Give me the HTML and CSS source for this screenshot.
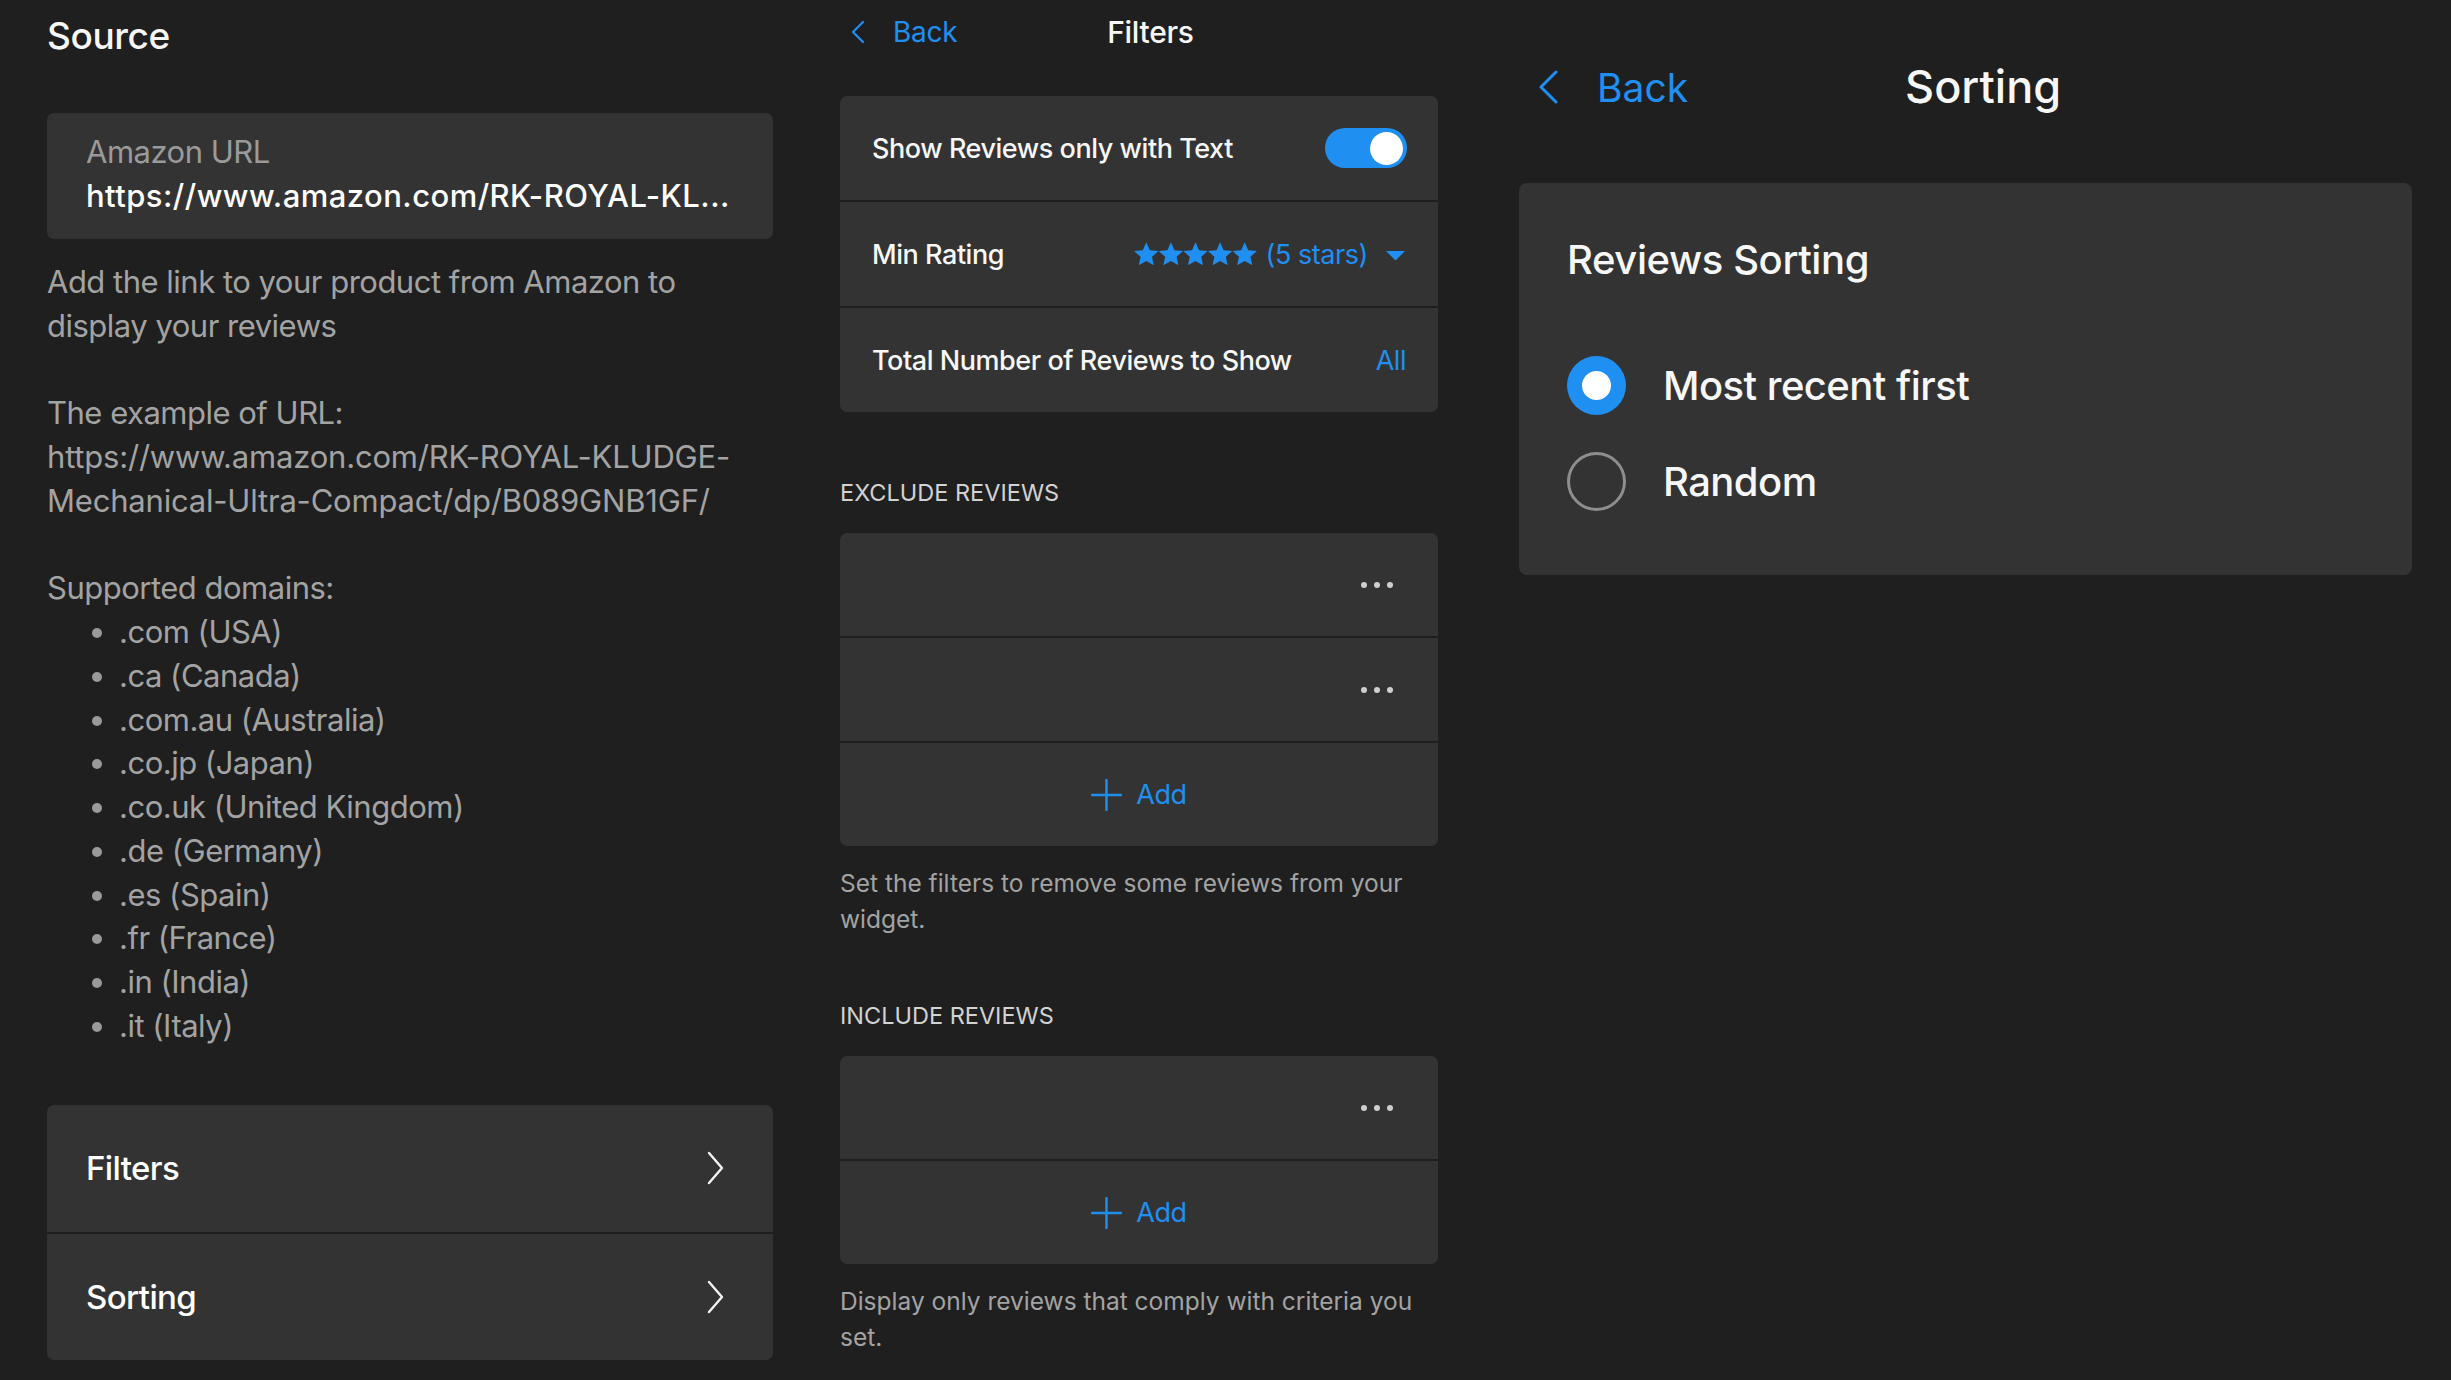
FILE: index.html
```html
<!DOCTYPE html>
<html lang="en">
<head>
<meta charset="utf-8">
<title>Source / Filters / Sorting</title>
<link rel="stylesheet" href="styles.css">
</head>
<body>
<div class="app">
  <section class="col col-source">
    <h1 class="source-title">Source</h1>
    <div class="url-field">
      <div class="url-label">Amazon URL</div>
      <div class="url-value">https://www.amazon.com/RK-ROYAL-KL...</div>
    </div>
    <div class="source-help">
      <p>Add the link to your product from Amazon to display your reviews</p>
      <p>The example of URL:<br><span class="example-url">https://www.amazon.com/RK-ROYAL-KLUDGE-Mechanical-Ultra-Compact/dp/B089GNB1GF/</span></p>
      <p class="domains-title">Supported domains:</p>
      <ul class="domains">
        <li>.com (USA)</li>
        <li>.ca (Canada)</li>
        <li>.com.au (Australia)</li>
        <li>.co.jp (Japan)</li>
        <li>.co.uk (United Kingdom)</li>
        <li>.de (Germany)</li>
        <li>.es (Spain)</li>
        <li>.fr (France)</li>
        <li>.in (India)</li>
        <li>.it (Italy)</li>
      </ul>
    </div>
    <div class="nav-card">
      <div class="nav-row">
        <span>Filters</span>
        <svg class="nav-chevron" width="17" height="34" viewBox="0 0 17 34"><path d="M2 2 L15 17 L2 32" fill="none" stroke="#f2f2f2" stroke-width="2.4" stroke-linecap="round" stroke-linejoin="round"/></svg>
      </div>
      <div class="nav-row">
        <span>Sorting</span>
        <svg class="nav-chevron" width="17" height="34" viewBox="0 0 17 34"><path d="M2 2 L15 17 L2 32" fill="none" stroke="#f2f2f2" stroke-width="2.4" stroke-linecap="round" stroke-linejoin="round"/></svg>
      </div>
    </div>
  </section>

  <section class="col col-filters">
    <header class="f-header">
      <a class="f-back">
        <svg class="f-back-chevron" width="14" height="24" viewBox="0 0 14 24"><path d="M12 2 L2 12 L12 22" fill="none" stroke="#1f8ff2" stroke-width="2.2" stroke-linecap="round" stroke-linejoin="round"/></svg>
        <span>Back</span>
      </a>
      <h2 class="f-title">Filters</h2>
    </header>

    <div class="f-card">
      <div class="f-row">
        <span class="f-label">Show Reviews only with Text</span>
        <span class="toggle"><span class="toggle-knob"></span></span>
      </div>
      <div class="f-row">
        <span class="f-label">Min Rating</span>
        <span class="rating">
          <svg class="stars" width="123" height="24" viewBox="0 0 123 24">
            <defs>
              <path id="star" d="M12.3 0.2 L15.83 8.15 L24.47 9.04 L18.01 14.85 L19.82 23.36 L12.3 19 L4.78 23.36 L6.59 14.85 L0.13 9.04 L8.77 8.15 Z"/>
            </defs>
            <g fill="#1f8ff2">
              <use href="#star"/>
              <use href="#star" x="24.6"/>
              <use href="#star" x="49.2"/>
              <use href="#star" x="73.8"/>
              <use href="#star" x="98.4"/>
            </g>
          </svg>
          <span class="rating-text">(5 stars)</span>
          <svg class="caret" width="21" height="11" viewBox="0 0 21 11"><path d="M1 1 L20 1 L10.5 10.5 Z" fill="#1f8ff2"/></svg>
        </span>
      </div>
      <div class="f-row">
        <span class="f-label">Total Number of Reviews to Show</span>
        <span class="f-value">All</span>
      </div>
    </div>

    <div class="f-section-label">EXCLUDE REVIEWS</div>
    <div class="f-card">
      <div class="f-row f-row-empty"><span class="dots"><i></i><i></i><i></i></span></div>
      <div class="f-row f-row-empty"><span class="dots"><i></i><i></i><i></i></span></div>
      <div class="f-row f-row-add">
        <svg class="plus" width="31" height="32" viewBox="0 0 31 32"><path d="M15.5 1 V31 M1 16 H30" stroke="#1f8ff2" stroke-width="2.4" stroke-linecap="round"/></svg>
        <span>Add</span>
      </div>
    </div>
    <p class="f-help">Set the filters to remove some reviews from your widget.</p>

    <div class="f-section-label">INCLUDE REVIEWS</div>
    <div class="f-card">
      <div class="f-row f-row-empty"><span class="dots"><i></i><i></i><i></i></span></div>
      <div class="f-row f-row-add">
        <svg class="plus" width="31" height="32" viewBox="0 0 31 32"><path d="M15.5 1 V31 M1 16 H30" stroke="#1f8ff2" stroke-width="2.4" stroke-linecap="round"/></svg>
        <span>Add</span>
      </div>
    </div>
    <p class="f-help">Display only reviews that comply with criteria you set.</p>
  </section>

  <section class="col col-sorting">
    <header class="s-header">
      <a class="s-back">
        <svg class="s-back-chevron" width="20" height="34" viewBox="0 0 20 34"><path d="M18 2 L3 17 L18 32" fill="none" stroke="#1f8ff2" stroke-width="3" stroke-linecap="round" stroke-linejoin="round"/></svg>
        <span>Back</span>
      </a>
      <h2 class="s-title">Sorting</h2>
    </header>
    <div class="s-card">
      <h3 class="s-card-title">Reviews Sorting</h3>
      <div class="s-options">
        <label class="s-option">
          <span class="radio radio-on"></span>
          <span>Most recent first</span>
        </label>
        <label class="s-option">
          <span class="radio"></span>
          <span>Random</span>
        </label>
      </div>
    </div>
  </section>
</div>
</body>
</html>
```

FILE: styles.css
```css
* { box-sizing: border-box; }

html, body {
  margin: 0;
  padding: 0;
  background: #1f1f1f;
}

body {
  font-family: Inter, "Noto Sans", "Liberation Sans", sans-serif;
  color: #f4f4f4;
  width: 2451px;
  height: 1380px;
  overflow: hidden;
}

.app {
  display: flex;
  align-items: flex-start;
  padding-left: 47px;
}

.col { flex: none; }

/* ---------- Source column ---------- */
.col-source {
  width: 726px;
  padding-top: 14px;
}

.source-title {
  margin: 0;
  font-size: 37px;
  line-height: 44px;
  font-weight: 500;
  letter-spacing: -0.4px;
  color: #f7f7f7;
}

.url-field {
  margin-top: 55px;
  background: #333333;
  border-radius: 7px;
  padding: 17px 40px 21px 39px;
  font-size: 31px;
  line-height: 44px;
  letter-spacing: -0.5px;
}

.url-label {
  color: #9a9a9a;
}

.url-value {
  color: #ffffff;
  font-weight: 500;
  letter-spacing: 0.45px;
  white-space: nowrap;
}

.source-help {
  margin-top: 21px;
  font-size: 31px;
  line-height: 43.75px;
  letter-spacing: -0.5px;
  color: #a3a3a3;
}

.example-url { letter-spacing: -0.2px; }

.source-help p {
  margin: 0 0 43.75px 0;
}

.source-help .domains-title {
  margin-bottom: 0;
}

.domains {
  margin: 0;
  padding-left: 72px;
}

.domains li::marker {
  color: #9a9a9a;
}

.nav-card {
  margin-top: 57px;
  background: #1f1f1f;
  border-radius: 7px;
  overflow: hidden;
  display: flex;
  flex-direction: column;
  gap: 2px;
}

.nav-row {
  height: 127px;
  background: #333333;
  display: flex;
  align-items: center;
  justify-content: space-between;
  padding: 0 49px 0 39px;
  font-size: 33px;
  font-weight: 500;
  letter-spacing: -0.6px;
  color: #ffffff;
}

.nav-row + .nav-row { height: 126px; }

/* ---------- Filters column ---------- */
.col-filters {
  width: 598px;
  margin-left: 67px;
  padding-top: 10px;
}

.f-header {
  height: 44px;
  display: flex;
  align-items: center;
}

.f-back {
  display: flex;
  align-items: center;
  color: #1f8ff2;
  font-size: 28px;
  letter-spacing: -0.3px;
  margin-left: 11px;
}

.f-back-chevron { margin-right: 28px; }

.f-title {
  margin: 0 0 0 150px;
  font-size: 30px;
  font-weight: 500;
  line-height: 44px;
  letter-spacing: -0.3px;
  color: #f7f7f7;
}

.f-card {
  margin-top: 42px;
  background: #1f1f1f;
  border-radius: 7px;
  overflow: hidden;
  display: flex;
  flex-direction: column;
  gap: 2px;
}

.f-row {
  height: 104px;
  background: #333333;
  display: flex;
  align-items: center;
  justify-content: space-between;
  padding: 0 32px;
  font-size: 27px;
  letter-spacing: -0.45px;
  color: #f7f7f7;
}

.f-label { font-weight: 450; }

.f-section-label + .f-card .f-row { height: 103px; }

.toggle {
  width: 82px;
  height: 40px;
  border-radius: 20px;
  background: #1f8ff2;
  display: flex;
  align-items: center;
  justify-content: flex-end;
  padding-right: 4px;
  margin-right: -1px;
}

.toggle-knob {
  width: 33px;
  height: 33px;
  border-radius: 50%;
  background: #ffffff;
}

.rating {
  display: flex;
  align-items: center;
  color: #1f8ff2;
}

.stars { margin-right: 9px; }

.rating-text { margin-right: 17px; }

.caret { margin-top: 2px; }

.f-value { color: #1f8ff2; }

.f-section-label {
  margin-top: 66px;
  font-size: 23.5px;
  line-height: 30px;
  color: #d2d2d2;
}

.f-section-label + .f-card { margin-top: 25px; }

.f-row-empty { justify-content: flex-end; padding-right: 45px; }

.dots {
  display: flex;
  gap: 7px;
}

.dots i {
  width: 6px;
  height: 6px;
  border-radius: 50%;
  background: #cfcfcf;
}

.f-row-add {
  justify-content: center;
  color: #1f8ff2;
  gap: 14px;
  padding-left: 32px;
  padding-right: 32px;
}

.f-help {
  margin: 19px 0 0 0;
  font-size: 24.5px;
  line-height: 36px;
  color: #a3a3a3;
}

.f-help + .f-section-label { margin-top: 64px; }

/* ---------- Sorting column ---------- */
.col-sorting {
  width: 893px;
  margin-left: 81px;
  padding-top: 59px;
}

.s-header {
  height: 56px;
  display: flex;
  align-items: center;
}

.s-back {
  display: flex;
  align-items: center;
  color: #1f8ff2;
  font-size: 39px;
  margin-left: 19px;
}

.s-back-chevron { margin-right: 39px; }

.s-title {
  margin: 0 0 0 217px;
  font-size: 45px;
  font-weight: 500;
  line-height: 56px;
  color: #f7f7f7;
}

.s-card {
  margin-top: 68px;
  background: #333333;
  border-radius: 8px;
  padding: 52px 48px 64px 48px;
}

.s-card-title {
  margin: 0;
  font-size: 40px;
  line-height: 50px;
  font-weight: 500;
  letter-spacing: -0.4px;
  color: #f7f7f7;
}

.s-options {
  margin-top: 70px;
  display: flex;
  flex-direction: column;
  gap: 36px;
}

.s-option {
  height: 60px;
  display: flex;
  align-items: center;
  gap: 37px;
  font-size: 40px;
  font-weight: 500;
  letter-spacing: -0.55px;
  color: #f7f7f7;
}

.radio {
  flex: none;
  width: 59px;
  height: 59px;
  border-radius: 50%;
  border: 3px solid #8e8e8e;
  display: flex;
  align-items: center;
  justify-content: center;
}

.radio-on {
  border: none;
  background: #1f8ff2;
}

.radio-on::after {
  content: "";
  width: 29px;
  height: 29px;
  border-radius: 50%;
  background: #ffffff;
}
```
